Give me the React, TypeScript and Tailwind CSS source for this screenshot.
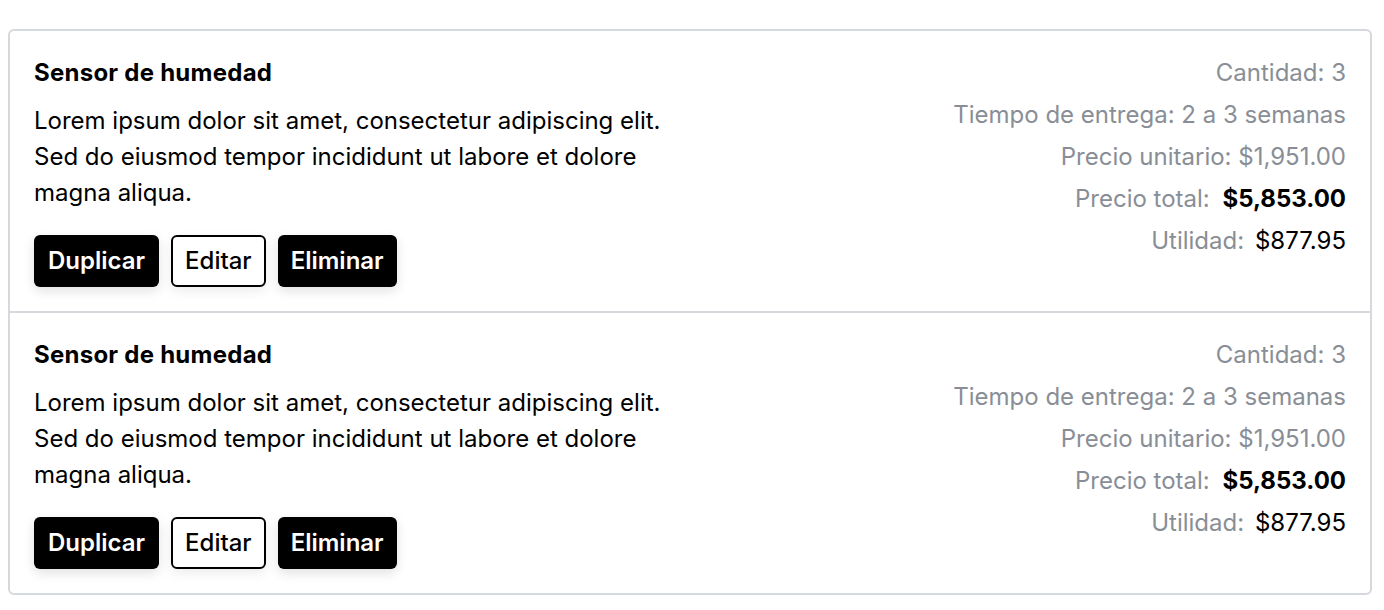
const items = [
  {
    name: 'Sensor de humedad',
    description:
      'Lorem ipsum dolor sit amet, consectetur adipiscing elit. Sed do eiusmod tempor incididunt ut labore et dolore magna aliqua.',
    quantity: 3,
    leadTime: '2 a 3 semanas',
    unitPrice: '$1,951.00',
    totalPrice: '$5,853.00',
    profit: '$877.95',
  },
  {
    name: 'Sensor de humedad',
    description:
      'Lorem ipsum dolor sit amet, consectetur adipiscing elit. Sed do eiusmod tempor incididunt ut labore et dolore magna aliqua.',
    quantity: 3,
    leadTime: '2 a 3 semanas',
    unitPrice: '$1,951.00',
    totalPrice: '$5,853.00',
    profit: '$877.95',
  },
]

type Item = (typeof items)[number]

function QuoteRow({ item }: { item: Item }) {
  return (
    <div className="flex justify-between px-6 py-6 border-b-2 border-[#d5d8dc] last:border-b-0">
      <div className="w-[640px]">
        <h3 className="text-[24px] leading-[36px] font-bold tracking-[0.25px]">{item.name}</h3>
        <p className="mt-3 text-[24px] leading-[36px]">{item.description}</p>
        <div className="mt-6 flex gap-3">
          <button className="h-[52px] px-[14px] rounded-md bg-black text-white text-[24px] font-semibold shadow-[0_4px_12px_rgba(0,0,0,0.12)]">
            Duplicar
          </button>
          <button className="h-[52px] px-[12px] rounded-md border-2 border-black bg-white text-black text-[24px] font-medium shadow-[0_4px_12px_rgba(0,0,0,0.08)]">
            Editar
          </button>
          <button className="h-[52px] px-[13px] rounded-md bg-black text-white text-[24px] font-semibold shadow-[0_4px_12px_rgba(0,0,0,0.12)]">
            Eliminar
          </button>
        </div>
      </div>
      <div className="flex flex-col items-end gap-[6px] text-[24px] leading-[36px] text-[#898e96]">
        <p>Cantidad: {item.quantity}</p>
        <p>Tiempo de entrega: {item.leadTime}</p>
        <p>Precio unitario: {item.unitPrice}</p>
        <p>
          Precio total: <span className="ml-[6px] font-bold text-black">{item.totalPrice}</span>
        </p>
        <p>
          Utilidad: <span className="ml-1 text-black">{item.profit}</span>
        </p>
      </div>
    </div>
  )
}

export default function App() {
  return (
    <div className="min-h-screen bg-white pl-[8px] pr-[12px] pt-[29px] font-['Inter',sans-serif] text-black">
      <div className="rounded-md border-2 border-[#d5d8dc] bg-white">
        {items.map((item, i) => (
          <QuoteRow key={i} item={item} />
        ))}
      </div>
    </div>
  )
}
